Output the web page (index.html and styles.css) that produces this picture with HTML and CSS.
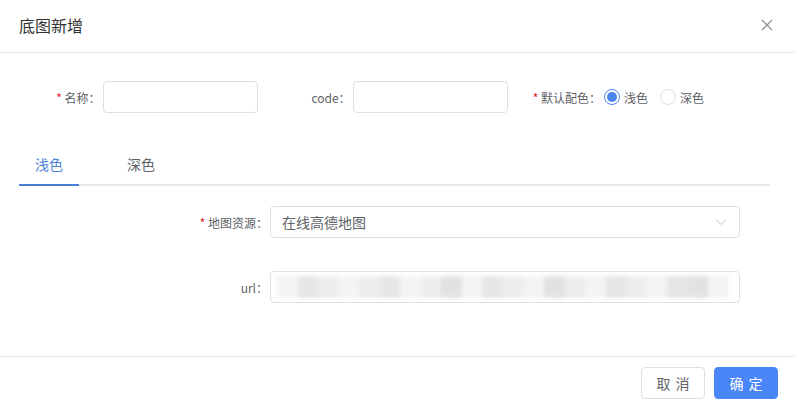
FILE: index.html
```html
<!DOCTYPE html>
<html lang="zh">
<head>
<meta charset="utf-8">
<link rel="stylesheet" href="styles.css">
</head>
<body>
<div class="dialog">
  <div class="header">
    <span class="title">底图新增</span>
    <svg class="close" width="12" height="12" viewBox="0 0 12 12"><path d="M1 1L11 11M11 1L1 11" stroke="#909399" stroke-width="1.3" fill="none"/></svg>
  </div>
  <div class="body">
    <div class="row1">
      <div class="item">
        <label class="lbl"><span class="req">*</span> 名称：</label>
        <div class="input"></div>
      </div>
      <div class="item">
        <label class="lbl">code：</label>
        <div class="input"></div>
      </div>
      <div class="item">
        <label class="lbl"><span class="req">*</span> 默认配色：</label>
        <div class="radios">
          <span class="radio on"><span class="dot"></span></span><span class="rtext">浅色</span>
          <span class="radio"></span><span class="rtext">深色</span>
        </div>
      </div>
    </div>
    <div class="tabs">
      <div class="tab active">浅色</div>
      <div class="tab">深色</div>
    </div>
    <div class="form2">
      <div class="item2">
        <label class="lbl2"><span class="req">*</span> 地图资源：</label>
        <div class="select">
          <span>在线高德地图</span>
          <svg width="12" height="8" viewBox="0 0 12 8"><path d="M1 1.5L6 6.5L11 1.5" stroke="#c0c4cc" stroke-width="1" fill="none"/></svg>
        </div>
      </div>
      <div class="item2">
        <label class="lbl2">url：</label>
        <div class="select url">
          <div class="blur">
            <i class="b3"></i><i class="b2"></i><i class="b1"></i><i class="b3"></i><i class="b1"></i><i class="b2"></i><i class="b3"></i><i class="b1"></i><i class="b4"></i><i class="b3"></i><i class="b2"></i><i class="b1"></i><i class="b3"></i><i class="b4"></i><i class="b1"></i><i class="b3"></i><i class="b2"></i><i class="b1"></i><i class="b3"></i><i class="b2"></i><i class="b4"></i><i class="b3"></i>
          </div>
        </div>
      </div>
    </div>
  </div>
  <div class="footer">
    <button class="btn">取 消</button>
    <button class="btn primary">确 定</button>
  </div>
</div>
</body>
</html>
```
FILE: styles.css
```css
* { box-sizing: border-box; }
body {
  margin: 0;
  background: #fff;
  font-family: "Noto Sans CJK SC", "Liberation Sans", sans-serif;
  color: #606266;
}
.dialog { width: 795px; height: 409px; display: flex; flex-direction: column; }
.header {
  height: 53px;
  border-bottom: 1px solid #e6e6e6;
  display: flex;
  align-items: center;
  justify-content: space-between;
  padding: 0 22px 3px 19px;
}
.title { font-size: 16px; color: #303133; }
.close { display: block; }
.body { flex: 1; padding-top: 28px; }
.row1 { display: flex; padding-left: 8px; }
.item { width: 250px; display: flex; align-items: center; height: 32px; }
.lbl {
  width: 95px;
  text-align: right;
  padding-right: 2px;
  font-size: 12px;
  color: #606266;
  white-space: nowrap;
}
.req { color: #e02020; }
.input {
  width: 156px;
  height: 32px;
  border: 1px solid #dcdfe6;
  border-radius: 4px;
}
.radios { display: flex; align-items: center; padding-left: 1px; font-size: 12px; }
.radio {
  width: 16px; height: 16px;
  border: 1px solid #dcdfe6;
  border-radius: 50%;
  display: flex; align-items: center; justify-content: center;
}
.radio.on { border-color: #4a86f0; }
.dot { width: 10px; height: 10px; border-radius: 50%; background: #4a86f0; }
.rtext { margin: 0 12px 0 4px; color: #606266; }
.tabs {
  margin: 32px 25px 0 19px;
  height: 41px;
  border-bottom: 2px solid #e4e7ed;
  display: flex;
}
.tab {
  padding: 0 16px;
  margin-right: 32px;
  font-size: 14px;
  line-height: 38px;
  color: #606266;
  position: relative;
}
.tab.active { color: #4a7fd8; }
.tab.active::after {
  content: "";
  position: absolute;
  left: 0; right: 0; bottom: -2px;
  height: 2px;
  background: #4a7fd8;
}
.form2 { padding-top: 20px; }
.item2 { display: flex; align-items: center; margin-bottom: 33px; }
.lbl2 {
  width: 270px;
  text-align: right;
  padding-right: 2px;
  font-size: 12px;
  color: #606266;
}
.select {
  width: 470px;
  height: 32px;
  border: 1px solid #dcdfe6;
  border-radius: 4px;
  display: flex;
  align-items: center;
  justify-content: space-between;
  padding: 0 12px 0 11px;
  font-size: 14px;
  color: #606266;
}
.select svg { display: block; }
.url { padding: 0 6px; }
.blur {
  display: flex;
  height: 22px;
  width: 452px;
  filter: blur(2px);
}
.blur i { flex: 1; display: block; height: 100%; }
.b1 { background: #ededed; }
.b2 { background: #e6e6e6; }
.b3 { background: #f4f4f4; }
.b4 { background: #e2e2e2; }
.footer {
  height: 53px;
  border-top: 1px solid #e6e6e6;
  display: flex;
  justify-content: flex-end;
  align-items: flex-start;
  padding: 10px 17px 0 0;
  gap: 9px;
}
.btn {
  width: 64px;
  height: 32px;
  border: 1px solid #dcdfe6;
  border-radius: 4px;
  background: #fff;
  font-family: "Noto Sans CJK SC", sans-serif;
  font-size: 14px;
  letter-spacing: 1px;
  text-indent: 1px;
  color: #606266;
  padding: 0;
}
.btn.primary { background: #4a86f7; border-color: #4a86f7; color: #fff; }
```
